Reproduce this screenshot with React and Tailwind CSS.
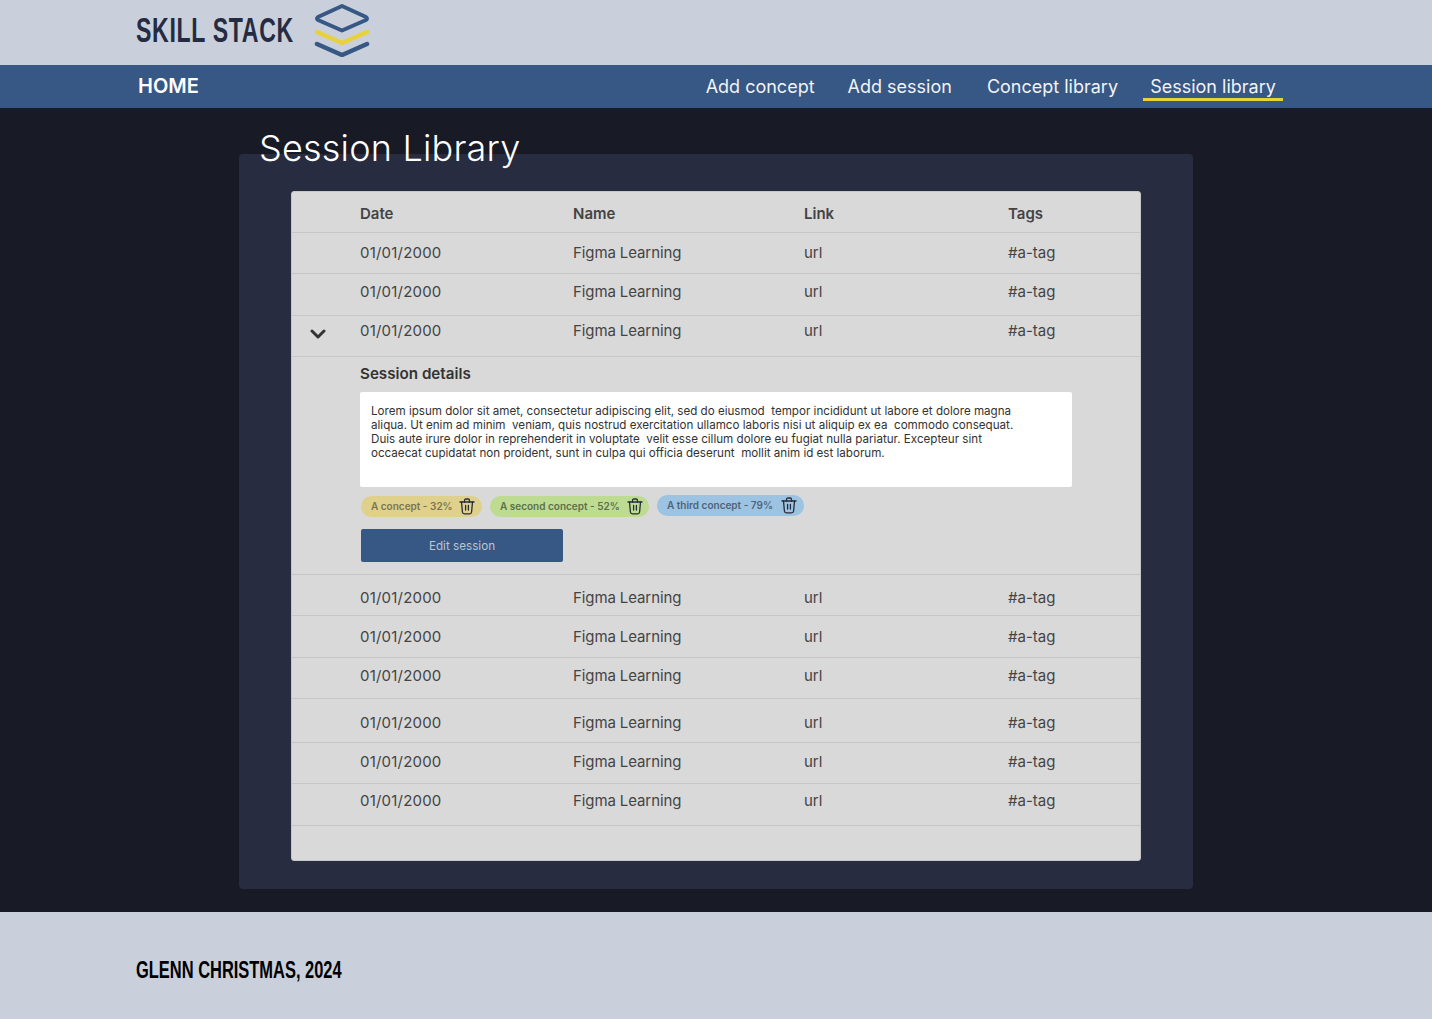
const COLS = "grid grid-cols-[68px_213px_231px_204px_1fr]";

// row heights in the design are not quite even, so each row keeps its own
const topRows = ["h-[41px] pt-[11px]", "h-[42px] pt-[9px]", "h-[41px] pt-[6px]"];
const bottomRows = [
  "h-[41px] pt-[14px]",
  "h-[42px] pt-[12px]",
  "h-[41px] pt-[9px]",
  "h-[44px] pt-[15px]",
  "h-[41px] pt-[10px]",
  "h-[42px] pt-[8px]",
];

const chips = [
  { label: "A concept - 32%", cls: "bg-[#dfd08c] text-[#7c7450] w-[121px] mt-px", text: "w-[88px]" },
  { label: "A second concept - 52%", cls: "bg-[#bddc92] text-[#5b7049] w-[159px] mt-px", text: "w-[127px]" },
  { label: "A third concept - 79%", cls: "bg-[#9cc3e2] text-[#4f6478] w-[147px]", text: "w-[114px]" },
];

function Logo() {
  return (
    <svg className="mb-[8px]" width="56" height="56" viewBox="0 0 56 56" fill="none" strokeWidth="4" strokeLinecap="round" strokeLinejoin="round">
      <path d="M28 5 L52 16 Q54 17.5 52 19 L28 29.5 L4 19 Q2 17.5 4 16 Z" stroke="#375784" />
      <path d="M3 31 L28 42 L53 31" stroke="#e8d23c" strokeWidth="4.5" />
      <path d="M3 43 L28 54 L53 43" stroke="#375784" strokeWidth="4.5" />
    </svg>
  );
}

function Trash() {
  return (
    <svg className="shrink-0" width="16" height="17" viewBox="0 0 16 17" fill="none" stroke="#252c3a" strokeWidth="1.3" strokeLinecap="round" strokeLinejoin="round">
      <path d="M1 4 H15" />
      <path d="M5.5 4 V2.5 Q5.5 1 7 1 H9 Q10.5 1 10.5 2.5 V4" />
      <path d="M2.5 4 L3.4 14 Q3.6 15.8 5.4 15.8 H10.6 Q12.4 15.8 12.6 14 L13.5 4" />
      <path d="M6.6 7.5 V12 M9.4 7.5 V12" />
    </svg>
  );
}

function Row({ cls, open }) {
  return (
    <div className={`${COLS} ${cls} border-b border-[#c6c6c6] text-[15px] leading-[18px] text-[#444444]`}>
      <div className="pl-[18px]">
        {open && (
          <svg className="mt-[7px]" width="16" height="10" viewBox="0 0 16 10" fill="none" stroke="#333333" strokeWidth="3" strokeLinecap="round" strokeLinejoin="round">
            <path d="M2 2 L8 8 L14 2" />
          </svg>
        )}
      </div>
      <div className="tracking-[0.2px]">01/01/2000</div>
      <div className="tracking-[-0.1px]">Figma Learning</div>
      <div>url</div>
      <div>#a-tag</div>
    </div>
  );
}

function Details() {
  return (
    <div className="h-[218px] border-b border-[#c6c6c6] pl-[68px] pt-[8px]">
      <h3 className="text-[15.2px] leading-[18px] font-semibold text-[#333333]">Session details</h3>
      <p className="mt-[9px] h-[95px] w-[712px] rounded-[2px] bg-white pl-[11px] pt-[12px] text-[11.62px] leading-[14px] whitespace-pre text-[#333333]">
        {"Lorem ipsum dolor sit amet, consectetur adipiscing elit, sed do eiusmod  tempor incididunt ut labore et dolore magna\naliqua. Ut enim ad minim  veniam, quis nostrud exercitation ullamco laboris nisi ut aliquip ex ea  commodo consequat.\nDuis aute irure dolor in reprehenderit in voluptate  velit esse cillum dolore eu fugiat nulla pariatur. Excepteur sint\noccaecat cupidatat non proident, sunt in culpa qui officia deserunt  mollit anim id est laborum."}
      </p>
      <div className="mt-[8px] flex items-start gap-2 pl-px">
        {chips.map((c) => (
          <span key={c.label} className={`flex h-[21px] items-center rounded-full pl-[10px] text-[10px] font-semibold ${c.cls}`}>
            <span className={`${c.text} shrink-0 whitespace-nowrap`}>{c.label}</span>
            <Trash />
          </span>
        ))}
      </div>
      <button className="mt-[12px] ml-px block h-[33px] w-[202px] rounded-[2px] bg-[#375784] pt-[3px] text-[11.7px] text-[#b9c4d4]">
        Edit session
      </button>
    </div>
  );
}

export default function App() {
  return (
    <div className="min-h-[1019px] bg-[#181a26] font-['Inter',sans-serif]">
      <header className="flex h-[65px] items-center gap-[21px] bg-[#c9d0dc] pl-[136px]">
        {/* no condensed display face installed, so the wordmark is squeezed */}
        <div className="mb-[6px] w-[157px]">
          <span className="block origin-left scale-x-[0.66] whitespace-nowrap text-[35px] font-bold leading-none tracking-[1px] text-[#252c42] font-['Liberation_Sans',sans-serif]">
            SKILL STACK
          </span>
        </div>
        <Logo />
      </header>

      <nav className="flex h-[43px] items-center bg-[#375784] pl-[138px] text-white">
        <span className="mb-[2px] text-[20px] font-semibold">HOME</span>
        <div className="ml-auto mr-[149px] flex items-center text-[18px] text-[#f1f3f6]">
          <a>Add concept</a>
          <a className="ml-[33px]">Add session</a>
          <a className="ml-[35px]">Concept library</a>
          <a className="ml-[25px] mt-[3px] w-[140px] border-b-[3px] border-[#e8d23c] text-center leading-[22px]">Session library</a>
        </div>
      </nav>

      <main className="pl-[239px] pt-[20px]">
        <h1 className="relative z-10 ml-[20px] text-[36px] leading-[41px] font-light tracking-[0.2px] text-white">Session Library</h1>
        <section className="mt-[-15px] h-[735px] w-[954px] rounded-[4px] bg-[#272c40] pl-[52px] pt-[37px]">
          <div className="h-[670px] w-[850px] rounded-[3px] border border-[#c6c6c6] bg-[#d9d9d9]">
            <div className={`${COLS} h-[41px] items-center border-b border-[#c6c6c6] pt-[5px] text-[15px] font-semibold text-[#444444]`}>
              <div />
              <div>Date</div>
              <div>Name</div>
              <div>Link</div>
              <div>Tags</div>
            </div>
            {topRows.map((cls, i) => (
              <Row key={i} cls={cls} open={i === 2} />
            ))}
            <Details />
            {bottomRows.map((cls, i) => (
              <Row key={i} cls={cls} />
            ))}
          </div>
        </section>
      </main>

      <footer className="mt-[23px] flex h-[107px] items-center bg-[#c9d0dc] pl-[136px] pt-[9px]">
        <span className="block origin-left scale-x-[0.715] whitespace-nowrap text-[23px] font-bold text-black font-['Liberation_Sans',sans-serif]">
          GLENN CHRISTMAS, 2024
        </span>
      </footer>
    </div>
  );
}
